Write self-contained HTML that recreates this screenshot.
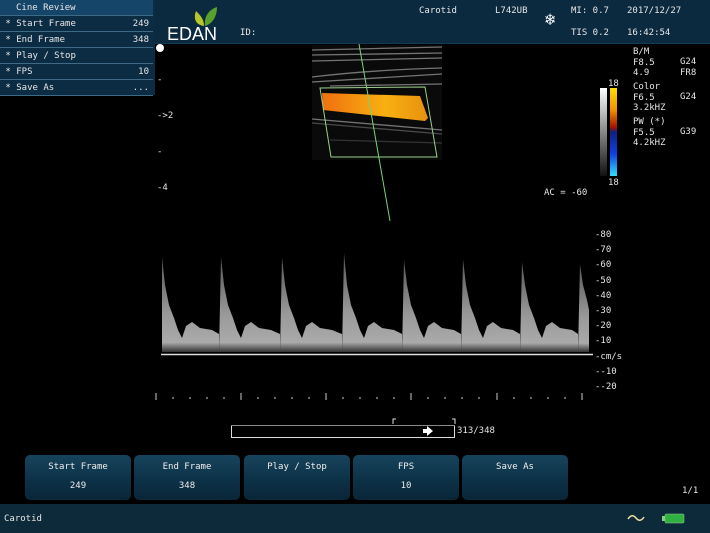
<!DOCTYPE html>
<html><head><meta charset="utf-8"><style>
*{margin:0;padding:0;box-sizing:border-box}
body{width:710px;height:533px;background:#000;position:relative;overflow:hidden;font-family:"DejaVu Sans Mono","Liberation Mono",monospace;color:#e6e6e6;font-size:9px}
.abs{position:absolute}
.hdr{left:0;top:0;width:710px;height:44px;background:#0b2a40;border-bottom:1px solid #123a55}
.menu{left:0;top:0;width:155px;height:95px;background:#0c2c44}
.mrow{position:absolute;left:0;width:153px;height:16px;border-bottom:1px solid #3f6a86;font-size:9px;line-height:16px}
.mrow span.v{position:absolute;right:4px}
.btn{position:absolute;top:455px;height:45px;width:106px;border-radius:5px;background:linear-gradient(#16445c,#0c3045 60%,#0a2638);text-align:center;font-size:9px;line-height:19px;padding-top:3px;color:#eee}
.foot{left:0;top:504px;width:710px;height:29px;background:#0d2a3a}
.rp{position:absolute;line-height:10.5px}
</style></head><body>
<div class="abs hdr"></div>
<div class="abs foot"></div>
<div class="abs menu">
 <div class="mrow" style="top:0;background:#15466a;padding-left:16px">Cine Review</div>
 <div class="mrow" style="top:16px">&nbsp;* Start Frame<span class="v">249</span></div>
 <div class="mrow" style="top:32px">&nbsp;* End Frame<span class="v">348</span></div>
 <div class="mrow" style="top:48px">&nbsp;* Play / Stop</div>
 <div class="mrow" style="top:64px">&nbsp;* FPS<span class="v">10</span></div>
 <div class="mrow" style="top:80px">&nbsp;* Save As<span class="v">...</span></div>
</div>
<svg class="abs" style="left:190px;top:5px" width="30" height="22" viewBox="0 0 30 22">
 <path d="M14 21 C6 20 3 14 6 6 C10 10 14 14 14 21Z" fill="#b8c62a"/>
 <path d="M15 21 C14 12 18 5 27 2 C27 12 22 19 15 21Z" fill="#5aa02c"/>
</svg>
<div class="abs" style="left:167px;top:24px;font-family:'Liberation Sans',sans-serif;font-size:18px;color:#fff">EDAN</div>
<div class="abs" style="left:240px;top:28px">ID:</div>
<div class="abs" style="left:419px;top:6px">Carotid</div>
<div class="abs" style="left:495px;top:6px">L742UB</div>
<div class="abs" style="left:545px;top:10px;font-size:17px;color:#fff">❄</div>
<div class="abs" style="left:571px;top:6px">MI: 0.7</div>
<div class="abs" style="left:571px;top:28px">TIS 0.2</div>
<div class="abs" style="left:627px;top:6px">2017/12/27</div>
<div class="abs" style="left:627px;top:28px">16:42:54</div>

<div class="abs" style="left:156px;top:44px;width:8px;height:8px;border-radius:50%;background:#fff"></div>
<div class="abs" style="left:157px;top:75px">-</div>
<div class="abs" style="left:157px;top:111px">-&gt;2</div>
<div class="abs" style="left:157px;top:147px">-</div>
<div class="abs" style="left:157px;top:183px">-4</div>

<svg class="abs" style="left:0;top:0" width="710" height="533">
 <defs>
  <linearGradient id="dg" x1="0" y1="0" x2="0" y2="1"><stop offset="0" stop-color="#555"/><stop offset="0.6" stop-color="#999"/><stop offset="0.9" stop-color="#aaa"/><stop offset="1" stop-color="#333"/></linearGradient>
  <linearGradient id="cb" x1="0" y1="0" x2="0" y2="1"><stop offset="0" stop-color="#ffe000"/><stop offset="0.25" stop-color="#f09000"/><stop offset="0.45" stop-color="#a01000"/><stop offset="0.5" stop-color="#102080"/><stop offset="0.75" stop-color="#1040e0"/><stop offset="1" stop-color="#30e0ff"/></linearGradient>
  <linearGradient id="gb" x1="0" y1="0" x2="0" y2="1"><stop offset="0" stop-color="#fff"/><stop offset="1" stop-color="#111"/></linearGradient>
  <linearGradient id="fl" x1="0" y1="0" x2="1" y2="0"><stop offset="0" stop-color="#f07010"/><stop offset="0.6" stop-color="#f8b010"/><stop offset="1" stop-color="#e89010"/></linearGradient>
 </defs>
 <rect x="312" y="45" width="130" height="115" fill="#0a0a0a"/>
 <g stroke="#bbb" stroke-width="1.3" fill="none" opacity="0.6">
  <path d="M312 50 L442 47"/><path d="M312 55 L442 53"/><path d="M312 61 L442 58"/>
  <path d="M312 77 Q370 70 442 68"/><path d="M312 82 L442 74"/><path d="M330 86 L442 84"/>
  <path d="M312 119 L442 130"/><path d="M312 123 L442 134" opacity="0.6"/><path d="M330 140 L442 143" opacity="0.4"/>
 </g>
 <path d="M322 93 L420 96 L428 118 L425 121 L323 110 Z" fill="url(#fl)"/>
 <path d="M320 88 L425 87 L437 157 L331 157 Z" fill="none" stroke="#9ad08a" stroke-width="1"/>
 <line x1="359" y1="44" x2="390" y2="221" stroke="#7ad07a" stroke-width="1"/>
 <rect x="600" y="88" width="7" height="88" fill="url(#gb)"/>
 <rect x="610" y="88" width="7" height="88" fill="url(#cb)"/>
 <g fill="url(#dg)">
  <path transform="translate(162,0)" d="M0 352 L0 257 L3 285 L7 305 L12 318 L16 330 L20 338 L24 326 L30 322 L38 328 L50 330 L57 334 L57 352 Z"/>
  <path transform="translate(221,0)" d="M-2 352 L0 257 L3 285 L7 305 L12 318 L16 330 L20 338 L24 326 L30 322 L38 328 L50 330 L59 334 L59 352 Z"/>
  <path transform="translate(282,0)" d="M-2 352 L0 257 L3 285 L7 305 L12 318 L16 330 L20 338 L24 326 L30 322 L38 328 L50 330 L60 334 L60 352 Z"/>
  <path transform="translate(344,0)" d="M-2 352 L0 253 L3 285 L7 305 L12 318 L16 330 L20 338 L24 326 L30 322 L38 328 L50 330 L58 334 L58 352 Z"/>
  <path transform="translate(404,0)" d="M-2 352 L0 260 L3 285 L7 305 L12 318 L16 330 L20 338 L24 326 L30 322 L38 328 L50 330 L57 334 L57 352 Z"/>
  <path transform="translate(463,0)" d="M-2 352 L0 259 L3 285 L7 305 L12 318 L16 330 L20 338 L24 326 L30 322 L38 328 L50 330 L57 334 L57 352 Z"/>
  <path transform="translate(522,0)" d="M-2 352 L0 262 L3 285 L7 305 L12 318 L16 330 L20 338 L24 326 L30 322 L38 328 L50 330 L56 334 L56 352 Z"/>
  <path transform="translate(580,0)" d="M-2 352 L0 264 L3 285 L7 300 L9 310 L9 352 Z"/>
 </g>
 <line x1="161" y1="354.5" x2="593" y2="354.5" stroke="#ddd" stroke-width="1.5"/>
 <g stroke="#ccc" stroke-width="1">
  <path d="M156 393v7M241 393v7M326 393v7M411 393v7M497 393v7M582 393v7"/>
  <path d="M173 397v2M190 397v2M207 397v2M224 397v2M258 397v2M275 397v2M292 397v2M309 397v2M343 397v2M360 397v2M377 397v2M394 397v2M428 397v2M445 397v2M462 397v2M479 397v2M514 397v2M531 397v2M548 397v2M565 397v2"/>
 </g>
 <rect x="231.5" y="425.5" width="223" height="12" fill="none" stroke="#ddd"/>
 <line x1="231" y1="425.5" x2="455" y2="425.5" stroke="#888"/>
 <path d="M393 424 V419 H396 M452 419 H455 V424" stroke="#ddd" fill="none"/>
 <path d="M423 429h4v-3l6 5-6 5v-3h-4z" fill="#fff"/>
 <path d="M628 519 q4 -6 8 -1 q4 5 8 -1" stroke="#f0e0a0" stroke-width="1.5" fill="none"/>
 <rect x="665" y="514" width="19" height="9" rx="1" fill="#2fb040" stroke="#9c9" stroke-width="0.5"/>
 <rect x="662" y="516" width="3" height="5" fill="#8c8"/>
</svg>
<div class="abs" style="left:608px;top:79px">18</div>
<div class="abs" style="left:608px;top:178px">18</div>
<div class="rp" style="left:633px;top:47px">B/M<br>F8.5<br>4.9</div>
<div class="rp" style="left:633px;top:82px">Color<br>F6.5<br>3.2kHZ</div>
<div class="rp" style="left:633px;top:117px">PW (*)<br>F5.5<br>4.2kHZ</div>
<div class="rp" style="left:680px;top:57px">G24<br>FR8</div>
<div class="rp" style="left:680px;top:92px">G24</div>
<div class="rp" style="left:680px;top:127px">G39</div>
<div class="abs" style="left:544px;top:188px">AC = -60</div>
<div class="abs" style="left:595px;top:228px;line-height:15.2px">-80<br>-70<br>-60<br>-50<br>-40<br>-30<br>-20<br>-10<br>-cm/s<br>--10<br>--20</div>
<div class="abs" style="left:457px;top:426px">313/348</div>
<div class="btn" style="left:25px">Start Frame<br>249</div>
<div class="btn" style="left:134px">End Frame<br>348</div>
<div class="btn" style="left:244px">Play / Stop</div>
<div class="btn" style="left:353px">FPS<br>10</div>
<div class="btn" style="left:462px">Save As</div>
<div class="abs" style="left:682px;top:486px">1/1</div>
<div class="abs" style="left:4px;top:514px">Carotid</div>
</body></html>
